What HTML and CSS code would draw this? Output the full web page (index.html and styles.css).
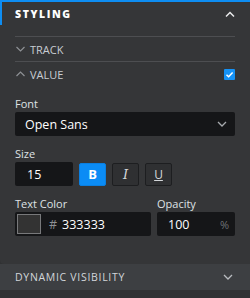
FILE: index.html
```html
<!DOCTYPE html>
<html lang="en">

<head>
    <meta charset="UTF-8">
    <title>Styling</title>
    <link rel="stylesheet" href="styles.css">
</head>

<body>
    <div class="panel">
        <div class="panel-header">
            <span class="panel-title">STYLING</span>
            <svg class="chev chev-head" width="10" height="6" viewBox="0 0 10 6"><path d="M1 5.5L5 1.5L9 5.5" fill="none" stroke="#e8e9ea" stroke-width="1.5"/></svg>
        </div>

        <div class="group">
            <div class="group-row">
                <svg class="chev" width="9" height="6" viewBox="0 0 9 6"><path d="M0.5 1L4.5 5L8.5 1" fill="none" stroke="#8e9195" stroke-width="1.2"/></svg>
                <span class="group-name">TRACK</span>
            </div>
            <div class="group-row">
                <svg class="chev" width="9" height="6" viewBox="0 0 9 6"><path d="M0.5 5L4.5 1L8.5 5" fill="none" stroke="#8e9195" stroke-width="1.2"/></svg>
                <span class="group-name">VALUE</span>
                <span class="check">
                    <svg width="11" height="11" viewBox="0 0 11 11"><path d="M2.5 5.8L4.6 7.8L8.6 3.4" fill="none" stroke="#fff" stroke-width="1.5"/></svg>
                </span>
            </div>
        </div>

        <div class="field">
            <div class="label">Font</div>
            <div class="select">
                <span>Open Sans</span>
                <svg width="10" height="6" viewBox="0 0 10 6"><path d="M1 1L5 5L9 1" fill="none" stroke="#a7aaae" stroke-width="1.3"/></svg>
            </div>
        </div>

        <div class="field">
            <div class="label">Size</div>
            <div class="size-row">
                <div class="input size-input">15</div>
                <div class="fmt-btn active"><b>B</b></div>
                <div class="fmt-btn"><i>I</i></div>
                <div class="fmt-btn"><u>U</u></div>
            </div>
        </div>

        <div class="field color-row">
            <div class="color-col">
                <div class="label">Text Color</div>
                <div class="input color-input">
                    <span class="swatch"></span>
                    <span class="hash">#</span>
                    <span>333333</span>
                </div>
            </div>
            <div class="opacity-col">
                <div class="label">Opacity</div>
                <div class="input opacity-input">
                    <span>100</span>
                    <span class="unit">%</span>
                </div>
            </div>
        </div>
    </div>

    <div class="collapsed">
        <span class="collapsed-title">DYNAMIC VISIBILITY</span>
        <svg width="10" height="6" viewBox="0 0 10 6"><path d="M1 1L5 5L9 1" fill="none" stroke="#b9bcc0" stroke-width="1.3"/></svg>
    </div>
</body>

</html>
```

FILE: styles.css
```css
body {
    margin: 0;
    width: 250px;
    height: 298px;
    background-color: #303133;
    font-family: "Open Sans", "Noto Sans", sans-serif;
    color: #e6e8ea;
    overflow: hidden;
}

.panel {
    background-color: #353638;
    border-top: 2px solid #0e8df2;
    border-bottom-left-radius: 4px;
    padding: 0 15px 28px 15px;
}

.panel-header {
    display: flex;
    align-items: center;
    justify-content: space-between;
    height: 23px;
    margin: 0 -15px;
    padding: 1px 15px 0 13px;
    box-sizing: border-box;
    border-left: 2px solid #0e8df2;
}

.panel-title {
    font-size: 10.5px;
    font-weight: 800;
    letter-spacing: 1.6px;
    color: #ffffff;
}

.group {
    margin-top: 11px;
    border-top: 1px solid #4d4e51;
}

.group-row {
    display: flex;
    align-items: center;
    height: 24px;
}

.group-row:first-child {
    border-bottom: 1px solid #4d4e51;
}

.group-row .chev {
    margin: 0 5px 0 1px;
}

.group-name {
    flex: 1;
    font-size: 11px;
    color: #c8cdd3;
}

.check {
    display: flex;
    width: 11px;
    height: 11px;
    background-color: #1592f6;
    border-radius: 1px;
}

.field {
    margin-top: 11px;
}

.label {
    font-size: 11px;
    line-height: 13px;
    margin-bottom: 2px;
    color: #dfe2e5;
}

.select {
    display: flex;
    align-items: center;
    justify-content: space-between;
    height: 24px;
    padding: 0 8px 0 10px;
    background-color: #151618;
    border-radius: 2px;
    font-size: 12.5px;
    color: #ffffff;
}

.size-row {
    display: flex;
    align-items: center;
    gap: 6px;
}

.input {
    display: flex;
    align-items: center;
    height: 24px;
    box-sizing: border-box;
    background-color: #151618;
    border-radius: 2px;
    font-size: 12.5px;
    color: #ffffff;
}

.size-input {
    width: 58px;
    padding-left: 12px;
}

.fmt-btn {
    display: flex;
    align-items: center;
    justify-content: center;
    width: 27px;
    height: 23px;
    box-sizing: border-box;
    background-color: #2f3032;
    border: 1px solid #1d1e20;
    border-radius: 2px;
    font-size: 13px;
    color: #d4d7da;
}

.fmt-btn i {
    font-family: "DejaVu Serif", serif;
    font-size: 13px;
}

.fmt-btn u {
    font-size: 12px;
}

.fmt-btn.active {
    background-color: #0b8cf5;
    border-color: #0a7fe0;
    color: #ffffff;
}

.color-row {
    display: flex;
    gap: 6px;
}

.color-col {
    width: 136px;
}

.opacity-col {
    flex: 1;
}

.color-input {
    padding-left: 2px;
}

.swatch {
    width: 24px;
    height: 20px;
    box-sizing: border-box;
    background-color: #333333;
    border: 1px solid #78797b;
    margin-right: 8px;
}

.hash {
    color: #8d9094;
    margin-right: 5px;
}

.opacity-input {
    justify-content: space-between;
    padding: 0 6px 0 11px;
}

.unit {
    color: #6f7276;
    font-size: 11px;
}

.collapsed {
    display: flex;
    align-items: center;
    justify-content: space-between;
    height: 26px;
    padding: 0 17px 0 15px;
    background-color: #3d3f42;
}

.collapsed-title {
    font-size: 10.5px;
    letter-spacing: 0.7px;
    color: #d2d6da;
}
```
